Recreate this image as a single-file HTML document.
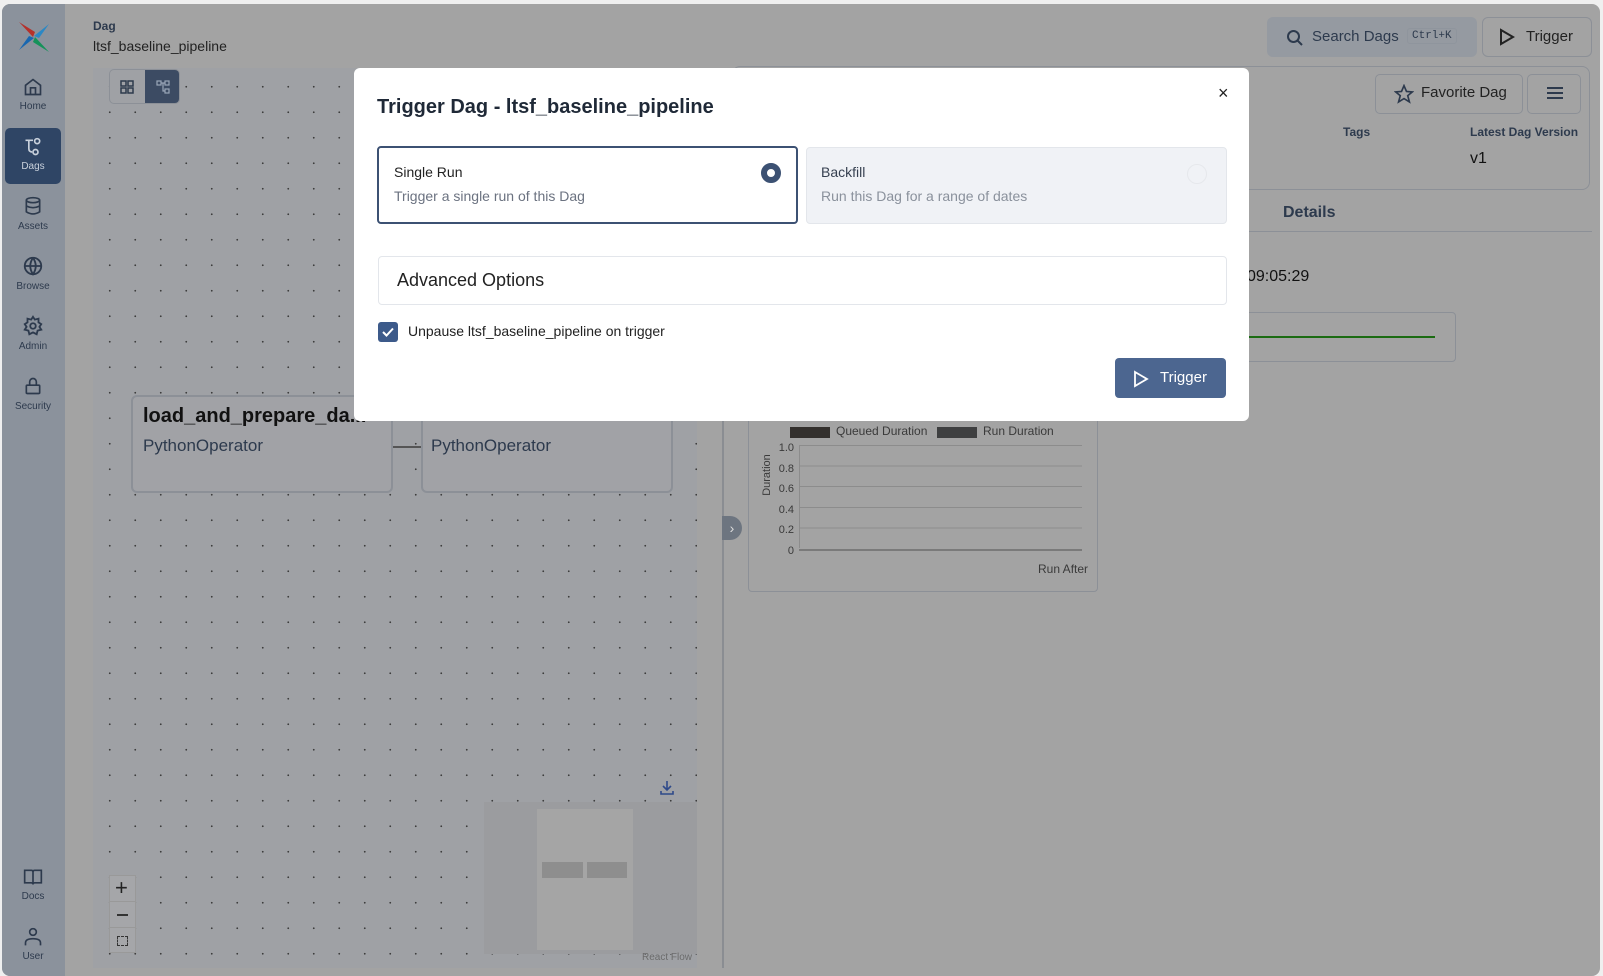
<!DOCTYPE html>
<html><head><meta charset="utf-8"><style>
*{box-sizing:border-box;margin:0;padding:0}
body{width:1603px;height:976px;background:#efefef;font-family:"Liberation Sans",sans-serif;position:relative;overflow:hidden;color:#1f2937}
.abs{position:absolute}
#app{left:2px;top:4px;width:1598px;height:972px;background:#a3a3a3;border-radius:8px;overflow:hidden}
#side{left:0;top:0;width:63px;height:972px;background:#8b929c}
.nav{position:absolute;left:3px;width:56px;height:56px;text-align:center;font-size:10px;color:#2d3a4d;padding-top:5px}
.nav svg{display:block;margin:0 auto 4px}
.canvas{left:91px;top:64px;width:604px;height:900px;background:#9fa1a5;
 background-image:radial-gradient(circle,#3d3d3d 0.7px,transparent 1.1px);background-size:25.5px 25.5px;background-position:4px 6px}
.node{background:#a1a2a6;border:2px solid #8c9097;border-radius:6px}
.modal{left:354px;top:68px;width:895px;height:353px;background:#fff;border-radius:6px}
</style></head><body>
<div id="app" class="abs">
 <div id="side" class="abs">
  <svg class="abs" style="left:15px;top:16px" width="34" height="34" viewBox="0 0 34 34">
   <path d="M2 2 L18 12 L16 17 Z" fill="#b5312b"/><path d="M32 4 L22 18 L17 16 Z" fill="#2b88c5"/>
   <path d="M32 32 L16 22 L18 17 Z" fill="#16925a"/><path d="M2 30 L12 16 L17 18 Z" fill="#1967b0"/>
  </svg>
  <div class="nav" style="top:68px"><svg width="20" height="20" viewBox="0 0 24 24" fill="none" stroke="#2d3a4d" stroke-width="2"><path d="M3 10 L12 3 L21 10 V21 H3 Z M9 21 V13 H15 V21"/></svg>Home</div>
  <div class="nav" style="top:124px;background:#2f4565;border-radius:5px;color:#c9d1dc;padding-top:9px"><svg width="20" height="20" viewBox="0 0 24 24" fill="none" stroke="#c9d1dc" stroke-width="2"><path d="M3 4H12M7 4V14Q7 18 11 18"/><circle cx="17" cy="5" r="3"/><circle cx="15" cy="18" r="3"/></svg>Dags</div>
  <div class="nav" style="top:186px"><svg width="20" height="22" viewBox="0 0 24 24" fill="none" stroke="#2d3a4d" stroke-width="2"><ellipse cx="12" cy="5" rx="8" ry="3"/><path d="M4 5V19Q12 24 20 19V5M4 12Q12 16 20 12"/></svg>Assets</div>
  <div class="nav" style="top:246px"><svg width="22" height="22" viewBox="0 0 24 24" fill="none" stroke="#2d3a4d" stroke-width="2"><circle cx="12" cy="12" r="9"/><path d="M3 12H21M12 3Q6 12 12 21Q18 12 12 3"/></svg>Browse</div>
  <div class="nav" style="top:306px"><svg width="22" height="22" viewBox="0 0 24 24" fill="none" stroke="#2d3a4d" stroke-width="2"><circle cx="12" cy="12" r="3"/><path d="M12 2L14 5L18 4L18 8L21 10L19 13L21 16L17 17L16 21L12 19L8 21L7 17L3 16L5 13L3 10L6 8L6 4L10 5Z"/></svg>Admin</div>
  <div class="nav" style="top:366px"><svg width="20" height="22" viewBox="0 0 24 24" fill="none" stroke="#2d3a4d" stroke-width="2"><rect x="4" y="11" width="16" height="10" rx="1"/><path d="M8 11V7A4 4 0 0 1 16 7V11"/></svg>Security</div>
  <div class="nav" style="top:858px"><svg width="20" height="20" viewBox="0 0 24 24" fill="none" stroke="#2d3a4d" stroke-width="2"><path d="M2 4H10Q12 4 12 6V21Q12 19 10 19H2ZM22 4H14Q12 4 12 6V21Q12 19 14 19H22Z"/></svg>Docs</div>
  <div class="nav" style="top:918px"><svg width="20" height="20" viewBox="0 0 24 24" fill="none" stroke="#2d3a4d" stroke-width="2"><circle cx="12" cy="6" r="4"/><path d="M3 22V19Q3 14 12 14Q21 14 21 19V22"/></svg>User</div>
 </div>
 <div class="abs" style="left:91px;top:15px;font-size:12px;font-weight:bold;color:#2d3a4d">Dag</div>
 <div class="abs" style="left:91px;top:34px;font-size:14px;color:#222">ltsf_baseline_pipeline</div>
 <div class="abs canvas"></div>
 <div class="abs" style="left:107px;top:65px;width:71px;height:35px;border:1px solid #8c9097;border-radius:5px;background:#9fa1a5;overflow:hidden">
  <div class="abs" style="left:35px;top:0;width:36px;height:35px;background:#3c4b63"></div>
  <svg class="abs" style="left:10px;top:10px" width="14" height="14" viewBox="0 0 14 14" fill="none" stroke="#2d3a4d" stroke-width="1.5"><rect x="1" y="1" width="5" height="5"/><rect x="8" y="1" width="5" height="5"/><rect x="1" y="8" width="5" height="5"/><rect x="8" y="8" width="5" height="5"/></svg>
  <svg class="abs" style="left:46px;top:10px" width="14" height="14" viewBox="0 0 14 14" fill="none" stroke="#9aa6b8" stroke-width="1.2"><rect x="1" y="1" width="4" height="4"/><rect x="9" y="1" width="4" height="4"/><rect x="9" y="9" width="4" height="4"/><path d="M5 3H9M7 3V11H9"/></svg>
 </div>
 <div class="abs node" style="left:129px;top:391px;width:262px;height:98px"></div>
 <div class="abs" style="left:141px;top:401px;font-size:20px;font-weight:bold;color:#111">load_and_prepare_da...</div>
 <div class="abs" style="left:141px;top:432px;font-size:17px;color:#2d3a4d">PythonOperator</div>
 <div class="abs" style="left:391px;top:442px;width:28px;height:2px;background:#555"></div>
 <div class="abs node" style="left:419px;top:391px;width:252px;height:98px"></div>
 <div class="abs" style="left:429px;top:432px;font-size:17px;color:#2d3a4d">PythonOperator</div>
 <div class="abs" style="left:107px;top:871px;width:27px;height:78px;background:#a5a6a9;border:1px solid #999"></div>
 <div class="abs" style="left:107px;top:897px;width:27px;height:1px;background:#999"></div>
 <div class="abs" style="left:107px;top:923px;width:27px;height:1px;background:#999"></div>
 <div class="abs" style="left:113px;top:871px;font-size:22px;color:#222">+</div>
 <div class="abs" style="left:115px;top:910px;width:11px;height:1.5px;background:#333"></div>
 <div class="abs" style="left:115px;top:932px;width:11px;height:10px;border:1.5px dashed #333"></div>
 <div class="abs" style="left:482px;top:798px;width:213px;height:152px;background:#9b9c9f"></div>
 <div class="abs" style="left:535px;top:805px;width:96px;height:141px;background:#a5a5a5"></div>
 <div class="abs" style="left:540px;top:858px;width:41px;height:16px;background:#8e8e8e"></div>
 <div class="abs" style="left:585px;top:858px;width:40px;height:16px;background:#8e8e8e"></div>
 <div class="abs" style="left:640px;top:948px;font-size:10px;color:#6b6b6b">React Flow</div>
 <svg class="abs" style="left:657px;top:776px" width="16" height="16" viewBox="0 0 16 16" fill="none" stroke="#2f4a8a" stroke-width="1.6"><path d="M8 1V10M4 6L8 10L12 6M2 11V14H14V11"/></svg>
 <div class="abs" style="left:720px;top:64px;width:1.5px;height:900px;background:#8a8d92"></div>
 <div class="abs" style="left:720px;top:512px;width:20px;height:24px;background:#6d7580;border-radius:0 12px 12px 0;color:#ddd;font-size:14px;line-height:24px;text-align:center">›</div>
 <div class="abs" style="left:1265px;top:13px;width:210px;height:40px;background:#959aa1;border-radius:6px"></div>
 <svg class="abs" style="left:1284px;top:25px" width="18" height="18" viewBox="0 0 18 18" fill="none" stroke="#2d3a4d" stroke-width="2"><circle cx="7.5" cy="7.5" r="5.5"/><path d="M11.5 11.5L16 16"/></svg>
 <div class="abs" style="left:1310px;top:24px;font-size:15px;color:#2d3a4d">Search Dags</div>
 <div class="abs" style="left:1405px;top:24px;padding:1px 4px;border:1px solid #8f959d;border-radius:3px;font-family:'Liberation Mono',monospace;font-size:11px;color:#2d3a4d">Ctrl+K</div>
 <div class="abs" style="left:1480px;top:13px;width:110px;height:40px;border:1px solid #8c9097;border-radius:6px"></div>
 <svg class="abs" style="left:1497px;top:24px" width="16" height="18" viewBox="0 0 16 18" fill="none" stroke="#222" stroke-width="2"><path d="M2 2L14 9L2 16Z"/></svg>
 <div class="abs" style="left:1524px;top:24px;font-size:15px;color:#222">Trigger</div>
 <div class="abs" style="left:730px;top:62px;width:858px;height:124px;border:1px solid #8c9097;border-radius:8px"></div>
 <div class="abs" style="left:1373px;top:70px;width:148px;height:40px;border:1px solid #8c9097;border-radius:5px"></div>
 <svg class="abs" style="left:1392px;top:80px" width="20" height="20" viewBox="0 0 24 24" fill="none" stroke="#2d3a4d" stroke-width="2"><path d="M12 2L15 9L22 9.5L16.5 14L18.5 21.5L12 17.5L5.5 21.5L7.5 14L2 9.5L9 9Z"/></svg>
 <div class="abs" style="left:1419px;top:80px;font-size:15px;color:#222">Favorite Dag</div>
 <div class="abs" style="left:1525px;top:70px;width:54px;height:40px;border:1px solid #8c9097;border-radius:5px"></div>
 <div class="abs" style="left:1545px;top:83px;width:16px;height:12px;border-top:2px solid #2d3a4d;border-bottom:2px solid #2d3a4d"></div>
 <div class="abs" style="left:1545px;top:88px;width:16px;height:2px;background:#2d3a4d"></div>
 <div class="abs" style="left:1341px;top:121px;font-size:12px;font-weight:bold;color:#2d3a4d">Tags</div>
 <div class="abs" style="left:1468px;top:121px;font-size:12px;font-weight:bold;color:#2d3a4d">Latest Dag Version</div>
 <div class="abs" style="left:1468px;top:146px;font-size:16px;color:#111">v1</div>
 <div class="abs" style="left:1281px;top:200px;font-size:16px;font-weight:bold;color:#2d3a4d">Details</div>
 <div class="abs" style="left:1245px;top:227px;width:345px;height:1px;background:#8c9097"></div>
 <div class="abs" style="left:1245px;top:264px;font-size:16px;color:#111">09:05:29</div>
 <div class="abs" style="left:1200px;top:308px;width:254px;height:50px;border:1px solid #8c9097;border-radius:4px"></div>
 <div class="abs" style="left:1240px;top:332px;width:193px;height:2px;background:#1b6b12"></div>
 <div class="abs" style="left:746px;top:410px;width:350px;height:178px;border:1px solid #8c9097;border-radius:4px"></div>
 <div class="abs" style="left:788px;top:423px;width:40px;height:11px;background:#33302d"></div>
 <div class="abs" style="left:834px;top:420px;font-size:12px;color:#3a3a3a">Queued Duration</div>
 <div class="abs" style="left:935px;top:423px;width:40px;height:11px;background:#3e3f40"></div>
 <div class="abs" style="left:981px;top:420px;font-size:12px;color:#3a3a3a">Run Duration</div>
 <div class="abs" style="left:744px;top:465px;font-size:11px;color:#3a3a3a;transform:rotate(-90deg);transform-origin:center">Duration</div>
 <div class="abs" style="left:772px;top:434px;font-size:11px;color:#3a3a3a;line-height:20.6px;text-align:right;width:20px">1.0<br>0.8<br>0.6<br>0.4<br>0.2<br>0</div>
 <div class="abs" style="left:797px;top:441px;width:283px;height:103px;border-left:1px solid #8c8c8c;background:repeating-linear-gradient(to bottom,#8c8c8c 0 1px,transparent 1px 20.6px)"></div>
 <div class="abs" style="left:797px;top:545px;width:283px;height:1.5px;background:#7a7a7a"></div>
 <div class="abs" style="left:1036px;top:558px;font-size:12px;color:#3a3a3a">Run After</div>
</div>
<div class="abs modal">
 <div class="abs" style="left:23px;top:28px;font-size:20px;font-weight:bold;color:#1f2937">Trigger Dag - ltsf_baseline_pipeline</div>
 <div class="abs" style="left:864px;top:15px;font-size:18px;color:#222">×</div>
 <div class="abs" style="left:23px;top:78px;width:421px;height:78px;border:2px solid #3c5173;border-radius:4px"></div>
 <div class="abs" style="left:40px;top:96px;font-size:14px;color:#222">Single Run</div>
 <div class="abs" style="left:40px;top:120px;font-size:14px;color:#6b7280">Trigger a single run of this Dag</div>
 <div class="abs" style="left:407px;top:95px;width:20px;height:20px;border-radius:50%;border:6px solid #3c5173;background:#fff"></div>
 <div class="abs" style="left:452px;top:79px;width:421px;height:77px;background:#f0f2f6;border:1px solid #e3e6eb;border-radius:4px"></div>
 <div class="abs" style="left:467px;top:96px;font-size:14px;color:#374151">Backfill</div>
 <div class="abs" style="left:467px;top:120px;font-size:14px;color:#8a919c">Run this Dag for a range of dates</div>
 <div class="abs" style="left:833px;top:96px;width:20px;height:20px;border-radius:50%;border:1px solid #e6e8ec"></div>
 <div class="abs" style="left:24px;top:188px;width:849px;height:49px;border:1px solid #e3e6eb;border-radius:4px"></div>
 <div class="abs" style="left:43px;top:202px;font-size:18px;color:#222">Advanced Options</div>
 <div class="abs" style="left:24px;top:254px;width:20px;height:20px;background:#3c5a8a;border-radius:3px"></div>
 <svg class="abs" style="left:27px;top:257px" width="14" height="14" viewBox="0 0 14 14" fill="none" stroke="#fff" stroke-width="2"><path d="M2 7L5.5 10.5L12 3.5"/></svg>
 <div class="abs" style="left:54px;top:255px;font-size:14px;color:#222">Unpause ltsf_baseline_pipeline on trigger</div>
 <div class="abs" style="left:761px;top:290px;width:111px;height:40px;background:#4c6690;border-radius:4px"></div>
 <svg class="abs" style="left:779px;top:302px" width="16" height="18" viewBox="0 0 16 18" fill="none" stroke="#fff" stroke-width="1.8"><path d="M2 2L14 9L2 16Z"/></svg>
 <div class="abs" style="left:806px;top:301px;font-size:15px;color:#fff">Trigger</div>
</div>
</body></html>
